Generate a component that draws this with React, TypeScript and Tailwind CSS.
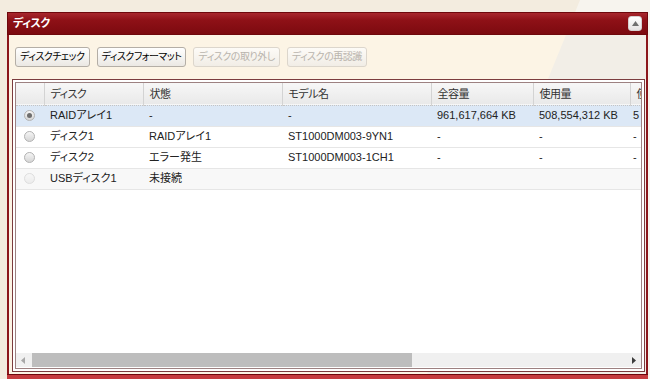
import React from "react";

type Row = {
  disk: string;
  status: string;
  model: string;
  total: string;
  used: string;
  extra: string;
  selected?: boolean;
  disabled?: boolean;
};

const ROWS: Row[] = [
  {
    disk: "RAIDアレイ1",
    status: "-",
    model: "-",
    total: "961,617,664 KB",
    used: "508,554,312 KB",
    extra: "5",
    selected: true,
  },
  {
    disk: "ディスク1",
    status: "RAIDアレイ1",
    model: "ST1000DM003-9YN1",
    total: "-",
    used: "-",
    extra: "-",
  },
  {
    disk: "ディスク2",
    status: "エラー発生",
    model: "ST1000DM003-1CH1",
    total: "-",
    used: "-",
    extra: "-",
  },
  {
    disk: "USBディスク1",
    status: "未接続",
    model: "",
    total: "",
    used: "",
    extra: "",
    disabled: true,
  },
];

const COLS = [28, 99, 139, 149, 102, 97, 80];
const HEADERS = ["", "ディスク", "状態", "モデル名", "全容量", "使用量", "使用率"];

const font =
  "font-['Liberation_Sans','Noto_Sans_CJK_JP',sans-serif] [font-feature-settings:'palt']";

function ToolButton({ label, disabled }: { label: string; disabled?: boolean }) {
  return (
    <button
      className={`h-[20px] rounded-[3px] border px-[4px] text-[10px] leading-none tracking-[-0.5px] ${
        disabled
          ? "border-[#dcd6cc] bg-[linear-gradient(#fdfbf7,#f1ede6)] text-[#b9b4ad]"
          : "border-[#b4aea6] bg-[linear-gradient(#ffffff,#ebe8e3)] text-black"
      }`}
    >
      {label}
    </button>
  );
}

function Radio({ checked, disabled }: { checked?: boolean; disabled?: boolean }) {
  return (
    <span
      className={`flex h-[11px] w-[11px] items-center justify-center rounded-full border ${
        disabled
          ? "border-[#dedede] bg-[linear-gradient(#f7f7f7,#ececec)]"
          : "border-[#b3b3b3] bg-[linear-gradient(#f5f5f5,#d6d6d6)]"
      }`}
    >
      {checked ? <span className="h-[5px] w-[5px] rounded-full bg-[#6e6e6e]" /> : null}
    </span>
  );
}

export default function App() {
  return (
    <div className={`relative h-[379px] w-[650px] overflow-hidden bg-[#f3ecdf] ${font}`}>
      <svg className="absolute inset-0" width="650" height="379">
        <polygon points="580,0 650,0 650,379 428,379" fill="#f7f4ee" />
      </svg>

      <div className="relative ml-[7px] mr-[2px] pt-[12px]">
        {/* title bar */}
        <div className="flex h-[23px] items-center justify-between border border-[#6e080c] bg-[linear-gradient(#a8272d,#8e1117_35%,#7c0a0f)] pl-[5px] pr-[5px]">
          <span className="text-[11px] font-bold tracking-[-0.5px] text-white">ディスク</span>
          <span className="flex h-[15px] w-[14px] items-center justify-center rounded-[3px] border border-[#d6d0d0] bg-[linear-gradient(#ffffff,#e6e3e3)]">
            <svg width="7" height="5" viewBox="0 0 7 5">
              <polygon points="3.5,0 7,5 0,5" fill="#6f6f6f" />
            </svg>
          </span>
        </div>

        {/* body */}
        <div className="relative flex h-[339px] flex-col border-x-2 border-[#8c161b] bg-[#fcf4e5]">
          <svg className="absolute inset-0" width="637" height="339">
            <polygon points="557,0 637,0 637,339 418,339" fill="#f2eee7" />
          </svg>

          <div className="relative flex gap-[7px] pl-[6px] pt-[12px]">
            <ToolButton label="ディスクチェック" />
            <ToolButton label="ディスクフォーマット" />
            <ToolButton label="ディスクの取り外し" disabled />
            <ToolButton label="ディスクの再認識" disabled />
          </div>

          <div className="relative ml-[3px] mr-[1px] mt-[12px] flex h-[293px] flex-col border border-[#7c3c3e] bg-white p-[2px]">
            <div className="flex min-h-0 flex-1 flex-col border border-[#9d8181]">
              <div className="min-h-0 flex-1 overflow-hidden">
                <table className="table-fixed border-collapse text-[11px] text-[#222]" style={{ width: COLS.reduce((a, b) => a + b, 0) }}>
                  <colgroup>
                    {COLS.map((w, i) => (
                      <col key={i} style={{ width: w }} />
                    ))}
                  </colgroup>
                  <thead>
                    <tr className="h-[22px] border-b border-dotted border-[#c4c4c4] bg-[linear-gradient(#f7f7f7,#e9e9e9)]">
                      {HEADERS.map((h, i) => (
                        <th
                          key={i}
                          className="border-r border-[#d3d3d3] px-[6px] text-left font-normal tracking-[-0.5px] text-[#333]"
                        >
                          {h}
                        </th>
                      ))}
                    </tr>
                  </thead>
                  <tbody>
                    {ROWS.map((r) => (
                      <tr
                        key={r.disk}
                        className={`h-[21px] border-b border-[#e6e6e6] ${
                          r.selected ? "bg-[#dce8f6]" : r.disabled ? "bg-[#f8f8f8]" : "bg-white"
                        }`}
                      >
                        <td className="pl-[8px]">
                          <Radio checked={r.selected} disabled={r.disabled} />
                        </td>
                        <td className="px-[6px] whitespace-nowrap">{r.disk}</td>
                        <td className="px-[6px] whitespace-nowrap">{r.status}</td>
                        <td className="px-[6px] whitespace-nowrap">{r.model}</td>
                        <td className="px-[6px] whitespace-nowrap">{r.total}</td>
                        <td className="px-[6px] whitespace-nowrap">{r.used}</td>
                        <td className="px-[3px] whitespace-nowrap">{r.extra}</td>
                      </tr>
                    ))}
                  </tbody>
                </table>
              </div>

              {/* horizontal scrollbar */}
              <div className="mb-[1px] flex h-[14px] items-center bg-[#f0f0f0]">
                <span className="flex w-[14px] justify-center">
                  <svg width="4" height="7" viewBox="0 0 4 7">
                    <polygon points="4,0 4,7 0,3.5" fill="#a8a8a8" />
                  </svg>
                </span>
                <span className="ml-[2px] h-[14px] w-[380px] bg-[#bdbdbd]" />
                <span className="flex-1" />
                <span className="flex w-[14px] justify-center">
                  <svg width="4" height="7" viewBox="0 0 4 7">
                    <polygon points="0,0 4,3.5 0,7" fill="#3c3c3c" />
                  </svg>
                </span>
              </div>
            </div>
          </div>
        </div>

        {/* next panel's title bar, cut by the window */}
        <div className="h-[6px] border-t border-[#6e080c] bg-[#c43b3e]" />
      </div>
    </div>
  );
}
